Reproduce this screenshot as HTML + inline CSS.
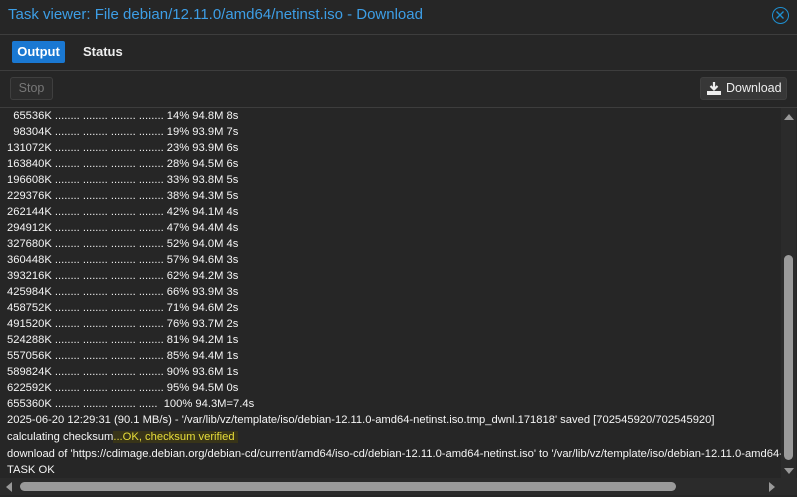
<!DOCTYPE html>
<html><head><meta charset="utf-8"><style>
*{margin:0;padding:0;box-sizing:border-box}
body{width:797px;height:497px;background:#262626;font-family:"Liberation Sans",Arial,sans-serif;overflow:hidden;position:relative;color:#f2f2f2}
.title{position:absolute;left:8px;top:6px;font-size:15px;color:#3d9ee6}
.close{position:absolute;left:772px;top:7px;width:17px;height:17px;border:1.5px solid #1f8fd0;border-radius:50%}
.hl{position:absolute;left:0;width:797px;height:1px;background:#3d3d3d}
.tab{position:absolute;top:41px;height:22px;font-size:13px;font-weight:bold;line-height:22px}
.btn{position:absolute;top:77px;height:23px;border:1px solid #3f3f3f;border-radius:3px;font-size:12.5px;line-height:21px}
.log{position:absolute;left:7px;top:108px;width:774px;height:370px;overflow:hidden;font-size:11.2px;line-height:16px;color:#f5f5f5}
.log div{height:16px;white-space:pre}
.ok{background:#383418;color:#e8de3a}
</style></head><body>
<div class="title">Task viewer: File debian/12.11.0/amd64/netinst.iso - Download</div>
<div class="close"><svg width="14" height="14" style="position:absolute;left:0;top:0"><path d="M3.5 3.5L10.5 10.5M10.5 3.5L3.5 10.5" stroke="#1f8fd0" stroke-width="1.4"/></svg></div>
<div class="hl" style="top:34px"></div>
<div class="tab" style="left:12px;width:53px;background:#1a78d2;border-radius:2px;text-align:center;color:#fff">Output</div>
<div class="tab" style="left:83px;color:#eee">Status</div>
<div class="hl" style="top:70px"></div>
<div class="btn" style="left:10px;width:43px;background:#2c2c2c;color:#777;text-align:center">Stop</div>
<div class="btn" style="left:700px;width:87px;background:#373737;color:#eee;padding-left:25px">Download
<svg width="14" height="14" style="position:absolute;left:6px;top:4px"><path d="M7 0V7M3.5 4L7 7.5L10.5 4" stroke="#eee" stroke-width="2.2" fill="none"/><rect x="0" y="9" width="14" height="4" fill="#eee"/></svg></div>
<div class="hl" style="top:107px"></div>
<div class="log"><div>  65536K ........ ........ ........ ........ 14% 94.8M 8s</div><div>  98304K ........ ........ ........ ........ 19% 93.9M 7s</div><div>131072K ........ ........ ........ ........ 23% 93.9M 6s</div><div>163840K ........ ........ ........ ........ 28% 94.5M 6s</div><div>196608K ........ ........ ........ ........ 33% 93.8M 5s</div><div>229376K ........ ........ ........ ........ 38% 94.3M 5s</div><div>262144K ........ ........ ........ ........ 42% 94.1M 4s</div><div>294912K ........ ........ ........ ........ 47% 94.4M 4s</div><div>327680K ........ ........ ........ ........ 52% 94.0M 4s</div><div>360448K ........ ........ ........ ........ 57% 94.6M 3s</div><div>393216K ........ ........ ........ ........ 62% 94.2M 3s</div><div>425984K ........ ........ ........ ........ 66% 93.9M 3s</div><div>458752K ........ ........ ........ ........ 71% 94.6M 2s</div><div>491520K ........ ........ ........ ........ 76% 93.7M 2s</div><div>524288K ........ ........ ........ ........ 81% 94.2M 1s</div><div>557056K ........ ........ ........ ........ 85% 94.4M 1s</div><div>589824K ........ ........ ........ ........ 90% 93.6M 1s</div><div>622592K ........ ........ ........ ........ 95% 94.5M 0s</div><div>655360K ........ ........ ........ ......  100% 94.3M=7.4s</div><div>2025-06-20 12:29:31 (90.1 MB/s) - '/var/lib/vz/template/iso/debian-12.11.0-amd64-netinst.iso.tmp_dwnl.171818' saved [702545920/702545920]</div><div style="height:18px;line-height:18px">calculating checksum<span class="ok">...OK, checksum verified </span></div><div>download of 'https://cdimage.debian.org/debian-cd/current/amd64/iso-cd/debian-12.11.0-amd64-netinst.iso' to '/var/lib/vz/template/iso/debian-12.11.0-amd64-netinst.iso' finished</div><div>TASK OK</div></div>
<div style="position:absolute;left:781px;top:108px;width:15px;height:370px;background:#2b2b2b"></div>
<svg width="10" height="8" style="position:absolute;left:784px;top:113px"><path d="M0 7L5 1L10 7Z" fill="#999"/></svg>
<div style="position:absolute;left:784px;top:255px;width:9px;height:205px;background:#9a9a9a;border-radius:5px"></div>
<svg width="10" height="8" style="position:absolute;left:784px;top:467px"><path d="M0 1L5 7L10 1Z" fill="#999"/></svg>
<div style="position:absolute;left:0;top:478px;width:781px;height:17px;background:#2b2b2b"></div>
<svg width="8" height="10" style="position:absolute;left:5px;top:482px"><path d="M7 0L1 5L7 10Z" fill="#999"/></svg>
<div style="position:absolute;left:20px;top:482px;width:656px;height:9px;background:#9a9a9a;border-radius:5px"></div>
<svg width="8" height="10" style="position:absolute;left:768px;top:482px"><path d="M1 0L7 5L1 10Z" fill="#999"/></svg>
<div style="position:absolute;left:781px;top:478px;width:16px;height:17px;background:#2b2b2b"></div>
</body></html>
